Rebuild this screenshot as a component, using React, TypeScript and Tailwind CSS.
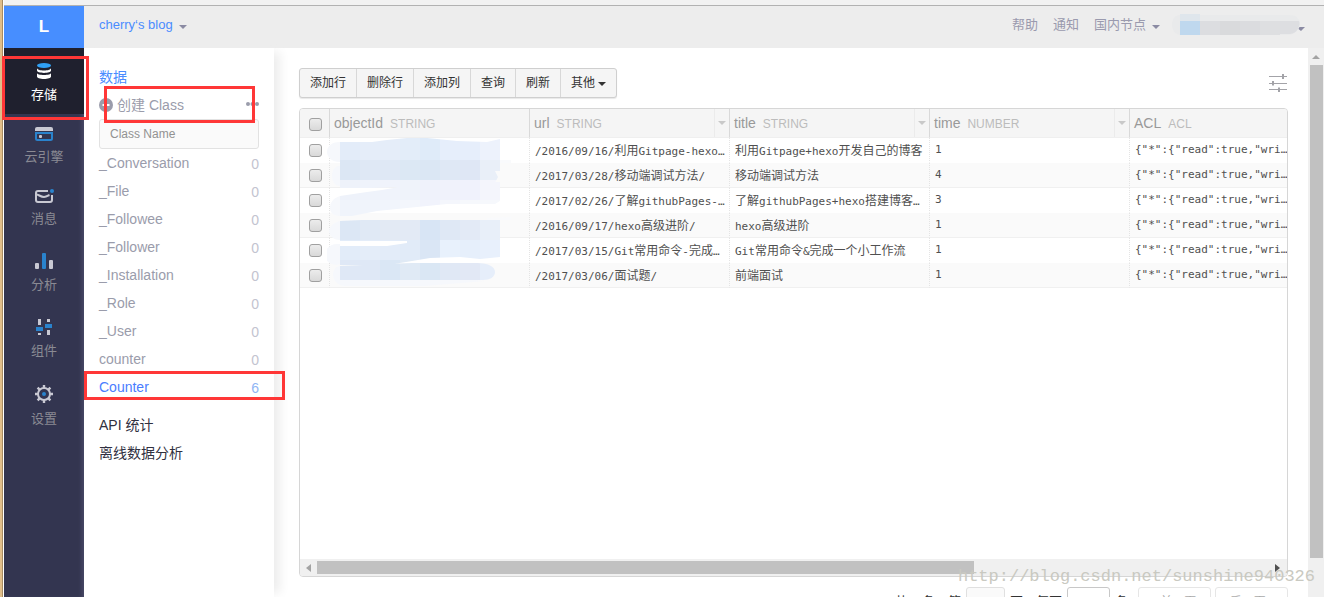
import { ReactNode } from "react";

const NAV_ITEMS = [
  { label: "存储", icon: <StorageIcon />, active: true },
  { label: "云引擎", icon: <EngineIcon /> },
  { label: "消息", icon: <MessageIcon /> },
  { label: "分析", icon: <ChartIcon /> },
  { label: "组件", icon: <ComponentIcon /> },
  { label: "设置", icon: <GearIcon /> },
];

const CLASSES = [
  { name: "_Conversation", count: 0 },
  { name: "_File", count: 0 },
  { name: "_Followee", count: 0 },
  { name: "_Follower", count: 0 },
  { name: "_Installation", count: 0 },
  { name: "_Role", count: 0 },
  { name: "_User", count: 0 },
  { name: "counter", count: 0 },
  { name: "Counter", count: 6, active: true },
];

const COLUMNS = [
  { name: "objectId", type: "STRING", menu: false },
  { name: "url", type: "STRING", menu: true },
  { name: "title", type: "STRING", menu: true },
  { name: "time", type: "NUMBER", menu: true },
  { name: "ACL", type: "ACL", menu: false },
];

const ACL = '{"*":{"read":true,"wri…';

const ROWS = [
  { url: "/2016/09/16/利用Gitpage-hexo…", title: "利用Gitpage+hexo开发自己的博客", time: 1 },
  { url: "/2017/03/28/移动端调试方法/", title: "移动端调试方法", time: 4 },
  { url: "/2017/02/26/了解githubPages-…", title: "了解githubPages+hexo搭建博客…", time: 3 },
  { url: "/2016/09/17/hexo高级进阶/", title: "hexo高级进阶", time: 1 },
  { url: "/2017/03/15/Git常用命令-完成…", title: "Git常用命令&完成一个小工作流", time: 1 },
  { url: "/2017/03/06/面试题/", title: "前端面试", time: 1 },
];

function StorageIcon() {
  return (
    <svg width="14" height="16" viewBox="0 0 14 16">
      <path d="M0 5v2.600c0 1.400 3 2.400 7 2.400s7-1 7-2.400V5c0 1.600-3 2.500-7 2.500S0 6.600 0 5z" fill="#fff" />
      <path d="M0 10v3.500c0 1.500 3 2.500 7 2.500s7-1 7-2.500V10c0 1.300-3 2-7 2s-7-.700-7-2z" fill="#fff" />
      <ellipse cx="7" cy="2.500" rx="7" ry="2.500" fill="#2fa0f5" />
    </svg>
  );
}

function EngineIcon() {
  return (
    <svg width="18" height="14" viewBox="0 0 18 14">
      <path d="M2 0h14a2 2 0 0 1 2 2v2H0V2a2 2 0 0 1 2-2z" fill="#c9c9d3" />
      <path d="M1 6v5.500A1.500 1.500 0 0 0 2.500 13h13a1.500 1.500 0 0 0 1.500-1.500V6z" fill="none" stroke="#2a83cd" strokeWidth="2" />
      <rect x="4" y="8" width="3" height="3" rx="1" fill="#c9c9d3" />
    </svg>
  );
}

function MessageIcon() {
  return (
    <svg width="19" height="14" viewBox="0 0 19 14">
      <path d="M13 2H3a2 2 0 0 0-2 2v7a2 2 0 0 0 2 2h12a2 2 0 0 0 2-2V6" fill="none" stroke="#c9c9d3" strokeWidth="2" />
      <path d="M2 5.500c2 .500 4 2.500 7 2.500s4-1.500 5.500-2" fill="none" stroke="#c9c9d3" strokeWidth="2" />
      <circle cx="17" cy="2" r="2" fill="#2a83cd" />
    </svg>
  );
}

function ChartIcon() {
  return (
    <svg width="18" height="18" viewBox="0 0 18 18">
      <rect x="0" y="12" width="4" height="6" rx="1" fill="#c9c9d3" />
      <rect x="7" y="2" width="4" height="16" rx="1" fill="#2a83cd" />
      <rect x="14" y="9" width="4" height="9" rx="1" fill="#c9c9d3" />
    </svg>
  );
}

function ComponentIcon() {
  return (
    <svg width="16" height="18" viewBox="0 0 16 18">
      <path d="M2 2h3v6H2zM2 16h3v2H2zM11 2h3v3h-3zM11 13h3v5h-3z" fill="#c9c9d3" />
      <path d="M0 10h7v4H0zM9 7h7v4H9z" fill="#2a83cd" />
    </svg>
  );
}

function GearIcon() {
  return (
    <svg width="18" height="20" viewBox="0 0 18 20">
      <g transform="translate(9 11)">
        <circle r="6" fill="none" stroke="#c9c9d3" strokeWidth="2" />
        <path
          d="M0-9v3M0 6v3M-9 0h3M6 0h3M-6.400-6.400l2 2M4.400 4.400l2 2M-6.400 6.400l2-2M4.400-4.400l2-2"
          stroke="#c9c9d3"
          strokeWidth="2.400"
        />
        <circle r="2" fill="#2a83cd" />
      </g>
    </svg>
  );
}

function Caret({ className }: { className: string }) {
  return (
    <svg width="8" height="4" viewBox="0 0 8 4" className={className}>
      <path d="M0 0h8L4 4z" fill="currentColor" />
    </svg>
  );
}

// Pixelated tiles that hide the account name in the header
function AccountMask() {
  return (
    <svg width="134" height="22" viewBox="0 0 134 22">
      <path d="M124 13h9l-4 4z" fill="#8b8ba3" />
      <path d="M8 1h110c7 0 10 5 10 9s-4 11-12 11H8C2 20 0 15 0 10S3 1 8 1z" fill="#e9eaeb" />
      <rect x="8" y="0" width="20" height="7" fill="#dfe6ec" />
      <rect x="8" y="7" width="20" height="14" fill="#bfd8ee" />
      <rect x="28" y="7" width="20" height="14" fill="#dcdde0" />
      <rect x="48" y="7" width="20" height="14" fill="#d9dadc" />
      <rect x="68" y="7" width="20" height="14" fill="#dbdcdf" />
      <rect x="88" y="7" width="20" height="14" fill="#dedfe1" />
      <path d="M108 7h19c2 4-2 13-9 13h-10z" fill="#dddee1" />
    </svg>
  );
}

const TILE_ROWS = [
  ["#e3ecf9", "#e5edf9", "#e5edf9", "#e3edf9", "#dfebf9", "#e6eefb", "#e6eefb", "#edf2fc"],
  ["#dce7f4", "#dfe8f5", "#dfe8f5", "#dce8f4", "#dbe7f4", "#dfe8f5", "#dfe7f5", "#e9eff8"],
  ["#eef2fa", "#eff3fb", "#f0f3fb", "#eff3fa", "#eff2fb", "#f0f2fb", "#f0f2fc", "#f4f5fc"],
  ["#f0f4fb", "#f0f4fb", "#f1f5fc", "#f3f6fc", "#f1f3fc", "#f4f6fc", "#f6f8fc", "#f6f8fc"],
  ["#dce7f5", "#e0e9f5", "#e3eaf4", "#e3eaf5", "#d8e5f5", "#dfe8f5", "#e3eaf6", "#e8eff9"],
  ["#e2ecf9", "#e4edf9", "#e3ecf9", "#e1ebf8", "#dae6f5", "#e8f1fc", "#e6effb", "#e8f0fc"],
  ["#dfe8f6", "#dfe8f6", "#dae7f5", "#e0eaf5", "#dae7f4", "#e0e8f5", "#e2e8f5", "#e6eefa"],
];

// Pixelated brush strokes that hide the object ids
function IdMask() {
  return (
    <svg width="186" height="150" viewBox="0 0 186 150">
      <clipPath id="strokes">
        <path d="M13 4h32l15-2 20-2h20l30 3 30 1 13-3v32h-5l3 6-3 6-45 1-40 3-40 1H13z" />
        <path d="M13 58l27-4 15-2 35-6 40-1 40-1h6v17l-8 5h-48l-40 4-30 3-25 5H13z" />
        <path d="M13 83l22-1h138v37l-20 2-20-2-30 1-30 5-15 2H13v-19h47l20-3 0-2H13z" />
        <path d="M13 128l47-2 25-1h65c12 0 18 4 18 9s-5 8-12 8H13z" />
      </clipPath>
      <path
        d="M13 4C4 4 0 9 0 14s5 10 13 10zM13 28C7 28 5 33 5 38s3 10 8 10h60L13 46zM13 58C6 60 3 65 3 70s4 8 10 8zM13 83C7 84 2 89 2 93s4 9 11 9zM13 106C3 105-2 111-2 117s5 10 12 10l3-1zM13 128c-4 0-7 4-7 9s5 11 12 11h80l60-5z"
        fill="#f6f8fc"
      />
      <path d="M153 22h31v3h-31zM160 80l24-1v3h-24z" fill="#f9fafc" />
      <g clipPath="url(#strokes)">
        {TILE_ROWS.map((row, r) =>
          row.map((color, c) => (
            <rect key={`${r}-${c}`} x={13 + c * 20} y={r === 0 ? 0 : 2 + r * 20} width="20" height={r === 0 ? 22 : 20} fill={color} />
          ))
        )}
      </g>
    </svg>
  );
}

// Chinese runs are set one size up from the monospace latin text around them
function MixedText({ text }: { text: string }) {
  return (
    <>
      {text.split(/([\u4e00-\u9fff]+)/).map((part, i) =>
        i % 2 ? (
          <span key={i} className="font-['Noto_Sans_CJK_SC',sans-serif] text-[12px]">
            {part}
          </span>
        ) : (
          part
        )
      )}
    </>
  );
}

function CheckBox({ label }: { label: string }) {
  return (
    <input
      type="checkbox"
      aria-label={label}
      className="block size-[13px] appearance-none rounded-[3px] border border-[#a0a0a0] bg-linear-to-b from-[#ececec] to-[#d9d9d9]"
    />
  );
}

function Cell({ children }: { children?: ReactNode }) {
  return (
    <td className="border-l border-l-[#e4e4e4] p-0 pl-[5px] [border-left-style:dotted]">
      <div className="h-[24px] overflow-hidden whitespace-nowrap">{children}</div>
    </td>
  );
}

function Header() {
  return (
    <header className="flex h-[42px] shrink-0 items-center bg-[#ededed] pb-[4px] pl-[15px] pr-[18px] text-[13px] text-[#9a9aae]">
      <button type="button" className="flex items-center gap-[6px] text-[#4a8cff]">
        cherry‘s blog
        <Caret className="mt-[3px] text-[#8b8ba3]" />
      </button>
      <nav className="ml-auto flex items-center gap-[15px]">
        <a href="#help">帮助</a>
        <a href="#notice">通知</a>
        <button type="button" className="flex items-center gap-[6px]">
          国内节点
          <Caret className="mt-[3px] text-[#8b8ba3]" />
        </button>
      </nav>
      <button type="button" aria-label="账号" className="ml-[12px]">
        <AccountMask />
      </button>
    </header>
  );
}

function SideNav() {
  return (
    <aside className="flex w-[80px] shrink-0 flex-col bg-[#333550] shadow-[inset_-4px_0_4px_-2px_#4b4c68]">
      <a href="#home" className="flex h-[42px] shrink-0 items-center justify-center bg-[#478eff] text-[17px] font-bold text-white">
        L
      </a>
      <nav>
        {NAV_ITEMS.map((item) => (
          <a
            key={item.label}
            href={`#${item.label}`}
            className={
              item.active
                ? "relative flex flex-col items-center border-t-2 border-[#1f202e] bg-[#1f202e] pt-[13px] pb-[9px] text-white"
                : "flex flex-col items-center pt-[13px] pb-[9px] text-[#8a8a93]"
            }
          >
            {item.icon}
            <span className="mt-[6px] text-[13px] leading-[20px]">{item.label}</span>
            {item.active && (
              <span className="absolute top-[6px] -left-[2px] z-10 h-[64px] w-[87px] border-3 border-[#ff3737]" />
            )}
          </a>
        ))}
      </nav>
    </aside>
  );
}

function ClassPanel() {
  return (
    <section className="relative w-[190px] shrink-0 bg-white px-[15px] pt-[15px] text-[14px] leading-[28px] text-[#9a9cab] shadow-[10px_0_10px_-4px_#ededed]">
      <h2 className="text-[#4a8cff]">数据</h2>
      <div className="relative flex items-center">
        <button type="button" className="flex items-center gap-[4px]">
          <svg width="14" height="14" viewBox="0 0 14 14">
            <circle cx="7" cy="7" r="7" fill="#9a9cab" />
            <path d="M7 3.500v7M3.500 7h7" stroke="#fff" strokeWidth="2" />
          </svg>
          创建 Class
        </button>
        <button type="button" aria-label="更多" className="ml-auto pb-[3px]">
          <svg width="13" height="4" viewBox="0 0 13 4" fill="#9a9cab">
            <circle cx="2" cy="2" r="2" />
            <circle cx="6.500" cy="2" r="2" />
            <circle cx="11" cy="2" r="2" />
          </svg>
        </button>
        <span className="absolute -top-[5px] left-[5px] z-10 h-[37px] w-[151px] border-3 border-[#ff3737]" />
      </div>
      <input
        type="text"
        aria-label="Class Name"
        placeholder="Class Name"
        className="block h-[30px] w-full rounded-[3px] border border-[#e2e2e2] bg-[#fafafa] px-[10px] text-[12px] placeholder:text-[#929292]"
      />
      <ul>
        {CLASSES.map((cls) => (
          <li key={cls.name} className="relative">
            <a
              href={`#${cls.name}`}
              className={cls.active ? "flex h-[28px] justify-between text-[#4a7dff]" : "flex h-[28px] justify-between"}
            >
              {cls.name}
              <span className={cls.active ? "pt-px text-[#8fb5f5]" : "pt-px text-[#c3c4d0]"}>{cls.count}</span>
            </a>
            {cls.active && (
              <span className="absolute -top-[2px] -left-[15px] z-10 h-[29px] w-[201px] border-3 border-[#ff3737]" />
            )}
          </li>
        ))}
      </ul>
      <ul className="mt-[10px] text-[#303040]">
        <li>
          <a href="#api">API 统计</a>
        </li>
        <li>
          <a href="#offline">离线数据分析</a>
        </li>
      </ul>
    </section>
  );
}

function Toolbar() {
  return (
    <div className="flex shrink-0 items-center justify-between">
      <div className="flex h-[30px] divide-x divide-[#d8d8d8] rounded-[3px] border border-[#cfcfcf] bg-[#f5f5f5] text-[12px] text-[#333] shadow-[0_1px_1px_#e8e8e8]">
        {["添加行", "删除行", "添加列", "查询", "刷新"].map((label) => (
          <button key={label} type="button" className="px-[10px]">
            {label}
          </button>
        ))}
        <button type="button" className="flex items-center gap-[3px] px-[10px]">
          其他
          <Caret className="mt-[2px]" />
        </button>
      </div>
      <button type="button" aria-label="列设置">
        <svg width="19" height="18" viewBox="0 0 19 18" stroke="#a3a3a8">
          <path d="M0 2.500h18M0 9.500h18M0 15.500h18" />
          <path d="M14 0v5M4 7v4.500M10 13.500v4.500" strokeWidth="2" />
        </svg>
      </button>
    </div>
  );
}

function DataTable() {
  return (
    <div className="relative mt-[10px] flex h-[calc(100vh-128px)] shrink-0 flex-col overflow-hidden rounded-[4px] border border-[#d6d6d6]">
      <table className="w-full table-fixed border-separate border-spacing-0 text-left">
        <colgroup>
          <col className="w-[29px]" />
          <col className="w-[200px]" />
          <col className="w-[200px]" />
          <col className="w-[200px]" />
          <col className="w-[200px]" />
          <col />
        </colgroup>
        <thead>
          <tr className="h-[29px] bg-[#f5f5f5] text-[14px] text-[#999]">
            <th className="border-b border-[#efefef] pt-[3px] pl-[9px]">
              <CheckBox label="全选" />
            </th>
            {COLUMNS.map((col) => (
              <th key={col.name} className="border-b border-l border-b-[#efefef] border-l-[#d9d9d9] p-0 pl-[4px] font-normal">
                <div className="flex h-[28px] items-center">
                  {col.name}
                  <span className="ml-[7px] pt-px text-[12px] text-[#bcbcbc]">{col.type}</span>
                  {col.menu && (
                    <button
                      type="button"
                      aria-label={`${col.name} 菜单`}
                      className="ml-auto flex h-full w-[15px] items-center justify-center border-l border-[#ebebeb]"
                    >
                      <Caret className="text-[#c9c9c9]" />
                    </button>
                  )}
                </div>
              </th>
            ))}
          </tr>
        </thead>
        <tbody className="font-['DejaVu_Sans_Mono','Noto_Sans_CJK_SC',monospace] text-[11px] leading-[24px] text-[#505050]">
          {ROWS.map((row) => (
            <tr key={row.url} className="h-[25px] *:border-b *:border-b-transparent even:bg-[#fafafa] even:*:border-b-[#f0f0f0]">
              <td className="p-0 pl-[9px]">
                <CheckBox label={row.title} />
              </td>
              <Cell />
              <Cell>
                <MixedText text={row.url} />
              </Cell>
              <Cell>
                <MixedText text={row.title} />
              </Cell>
              <Cell>{row.time}</Cell>
              <Cell>{ACL}</Cell>
            </tr>
          ))}
        </tbody>
      </table>
      <div className="absolute top-[29px] left-[27px]">
        <IdMask />
      </div>
      <div className="mt-auto flex h-[17px] items-center bg-[#f0f0f0] pr-[7px] pl-[6px]">
        <svg width="5" height="8" viewBox="0 0 5 8">
          <path d="M5 0v8L0 4z" fill="#a3a3a3" />
        </svg>
        <div className="mx-[6px] flex-1">
          <div className="h-[13px] w-[69%] bg-[#c1c1c1]" />
        </div>
        <svg width="5" height="8" viewBox="0 0 5 8">
          <path d="M0 0v8l5-4z" fill="#505050" />
        </svg>
      </div>
    </div>
  );
}

function Pagination() {
  return (
    <div className="mt-[10px] flex h-[30px] shrink-0 items-center justify-end text-[13px] text-[#333]">
      <b className="mr-[14px]">Counter</b>
      <span className="mr-[13px]">共 6 条</span>
      <label className="flex items-center gap-[5px]">
        第
        <input type="text" className="h-[30px] w-[39px] rounded-[3px] border border-[#e0e0e0] bg-[#fafafa]" />
        页
      </label>
      <label className="ml-[13px] flex items-center gap-[5px]">
        每页
        <input type="text" className="h-[30px] w-[43px] rounded-[3px] border border-[#c8c8c8] bg-white" />
        条
      </label>
      <button type="button" className="ml-[10px] h-[30px] w-[73px] rounded-[3px] border border-[#e6e6e6] text-[12px] text-[#aaa]">
        ‹ 前一页
      </button>
      <button type="button" className="ml-[4px] h-[30px] w-[73px] rounded-[3px] border border-[#e6e6e6] text-[12px] text-[#aaa]">
        后一页 ›
      </button>
    </div>
  );
}

export default function App() {
  return (
    <div className="relative flex h-screen overflow-hidden bg-white font-['Liberation_Sans','Noto_Sans_CJK_SC',sans-serif]">
      <div className="w-[4px] shrink-0 border-r border-l-2 border-r-white border-l-[#e0be8a] bg-[#a88c62]" />
      <div className="flex min-w-0 flex-1 flex-col">
        <div className="h-[6px] shrink-0 border-b border-[#b2b2b2] bg-[#f2f2f2]" />
        <div className="flex min-h-0 flex-1">
          <SideNav />
          <div className="flex min-w-0 flex-1 flex-col">
            <Header />
            <div className="flex min-h-0 flex-1">
              <ClassPanel />
              <main className="flex min-w-0 flex-1 flex-col overflow-hidden pt-[20px] pr-[20px] pl-[25px]">
                <Toolbar />
                <DataTable />
                <Pagination />
              </main>
              <div className="flex w-[16px] shrink-0 flex-col items-center bg-[#f0f0f0] pt-[7px]">
                <svg width="8" height="4" viewBox="0 0 8 4" className="mb-[6px] shrink-0">
                  <path d="M4 0l4 4H0z" fill="#a3a3a3" />
                </svg>
                <div className="h-[91%] w-[13px] bg-[#c1c1c1]" />
              </div>
            </div>
          </div>
        </div>
      </div>
      <p className="absolute right-[9px] bottom-[7px] font-['Liberation_Mono',monospace] text-[17px] leading-[26px] text-[#c9c9c1]">
        http://blog.csdn.net/sunshine940326
      </p>
    </div>
  );
}
